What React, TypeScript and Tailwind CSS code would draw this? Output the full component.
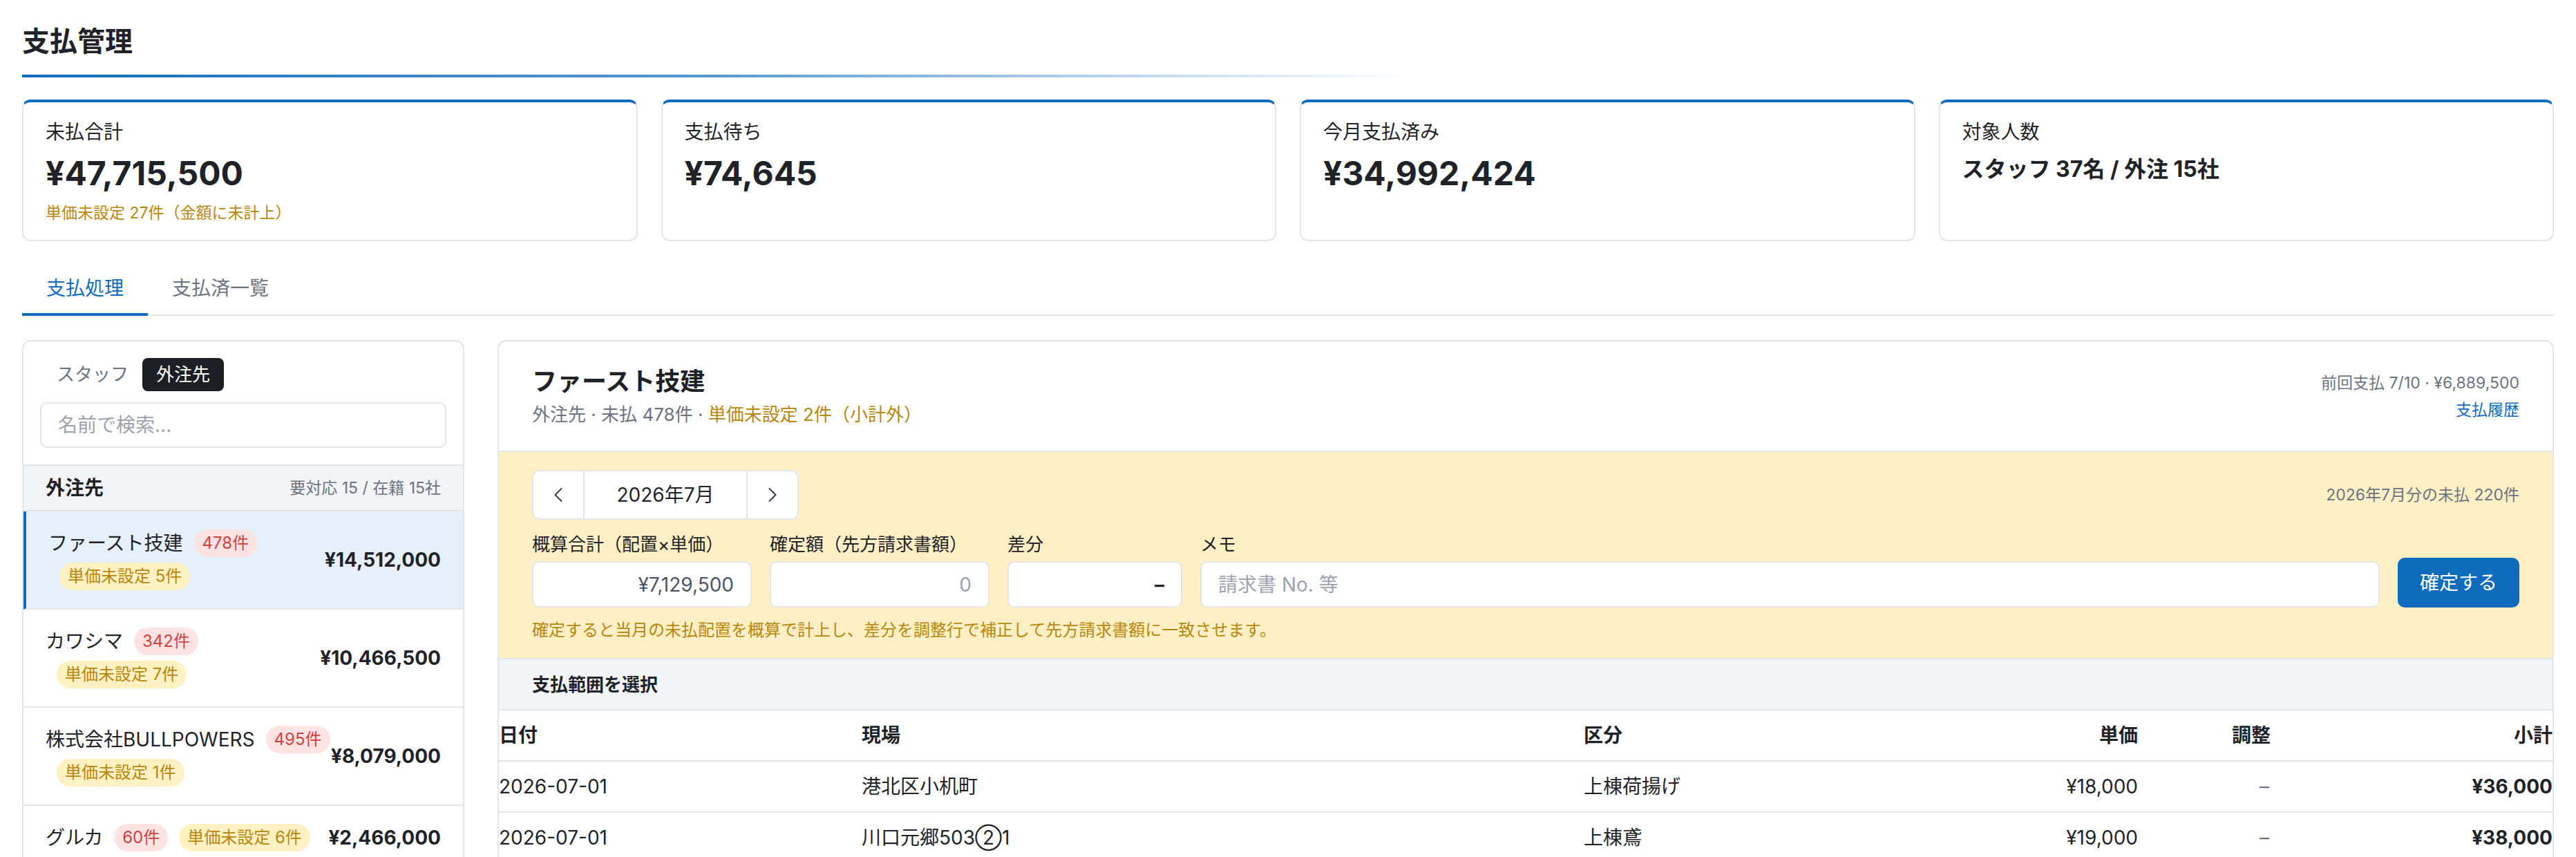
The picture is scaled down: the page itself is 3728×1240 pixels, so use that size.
import { ChevronLeft, ChevronRight } from "lucide-react";

const kpis = [
  { label: "未払合計", value: "¥47,715,500", note: "単価未設定 27件（金額に未計上）" },
  { label: "支払待ち", value: "¥74,645" },
  { label: "今月支払済み", value: "¥34,992,424" },
  { label: "対象人数", value: "スタッフ 37名 / 外注 15社", small: true },
];

const vendors = [
  { name: "ファースト技建", count: "478件", unset: "単価未設定 5件", amount: "¥14,512,000", active: true, wrap: true },
  { name: "カワシマ", count: "342件", unset: "単価未設定 7件", amount: "¥10,466,500", wrap: true },
  { name: "株式会社BULLPOWERS", count: "495件", unset: "単価未設定 1件", amount: "¥8,079,000", wrap: true },
  { name: "グルカ", count: "60件", unset: "単価未設定 6件", amount: "¥2,466,000" },
  { name: "大成工業", count: "41件", amount: "¥1,845,000" },
  { name: "ミナト建設", count: "38件", amount: "¥1,520,000" },
];

const rows = [
  { date: "2026-07-01", site: "港北区小机町", kind: "上棟荷揚げ", price: "¥18,000", total: "¥36,000" },
  { date: "2026-07-01", site: "川口元郷503②1", kind: "上棟鳶", price: "¥19,000", total: "¥38,000" },
  { date: "2026-07-02", site: "川口元郷503②1", kind: "上棟鳶", price: "¥19,000", total: "¥19,000" },
  { date: "2026-07-02", site: "港北区小机町", kind: "上棟荷揚げ", price: "¥18,000", total: "¥18,000" },
];

const Badge = ({ tone, children }: { tone: "red" | "yellow"; children: string }) => (
  <span
    className={
      tone === "red"
        ? "ml-[16px] inline-block shrink-0 rounded-full bg-[#fde4e2] px-[12px] text-[24px] leading-[40px] text-[#d23f3f]"
        : "ml-[16px] inline-block shrink-0 rounded-full bg-[#fff1c2] px-[12px] text-[24px] leading-[40px] text-[#b8860b]"
    }
  >
    {children}
  </span>
);

const App = () => {
  return (
    <div className="min-h-screen bg-white px-[32px] pb-[40px] text-[#1f2328] font-[family-name:'Inter','Noto_Sans_CJK_JP',sans-serif]">
      <h1 className="pt-[34px] text-[40px] font-bold leading-[52px]">支払管理</h1>
      <div className="mt-[22px] h-[4px] w-[2000px] bg-linear-to-r from-[#0f6cbd] via-[#0f6cbd]/70 to-transparent" />

      {/* KPI cards */}
      <div className="mt-[32px] grid grid-cols-4 gap-[34px]">
        {kpis.map((k) => (
          <div
            key={k.label}
            className="h-[205px] rounded-[12px] border-2 border-t-4 border-[#e3e5e9] border-t-[#0f6cbd] px-[32px] pt-[25px]"
          >
            <div className="text-[28px] leading-[36px]">{k.label}</div>
            {k.small ? (
              <div className="mt-[14px] text-[32px] font-bold leading-[44px]">{k.value}</div>
            ) : (
              <div className="mt-[14px] text-[48px] font-bold leading-[56px]">{k.value}</div>
            )}
            {k.note && (
              <div className="mt-[14px] text-[23px] leading-[30px] text-[#b8860b]">{k.note}</div>
            )}
          </div>
        ))}
      </div>

      {/* tabs */}
      <div className="mt-[32px] flex border-b-2 border-[#e3e5e9]">
        <button className="-mb-[2px] border-b-4 border-[#0f6cbd] px-[35px] py-[18px] text-[28px] leading-[36px] text-[#0f6cbd]">
          支払処理
        </button>
        <button className="-mb-[2px] border-b-4 border-transparent px-[35px] py-[18px] text-[28px] leading-[36px] text-[#6b7280]">
          支払済一覧
        </button>
      </div>

      <div className="mt-[35px] flex items-start gap-[48px]">
        {/* left: vendor list */}
        <div className="w-[640px] shrink-0 overflow-hidden rounded-[12px] border-2 border-[#e3e5e9]">
          <div className="p-[24px]">
            <div className="ml-[4px] flex">
              <button className="h-[48px] rounded-[8px] px-[20px] text-[26px] leading-[48px] text-[#6b7280]">
                スタッフ
              </button>
              <button className="h-[48px] rounded-[8px] bg-[#1b1f24] px-[20px] text-[26px] leading-[48px] text-white">
                外注先
              </button>
            </div>
            <input
              placeholder="名前で検索..."
              className="mt-[16px] h-[66px] w-full rounded-[10px] border-2 border-[#e3e5e9] px-[24px] text-[28px] outline-none placeholder:text-[#9ca3af]"
            />
          </div>
          <div className="flex h-[68px] items-center justify-between border-y-2 border-[#e3e5e9] bg-[#f3f4f7] px-[32px]">
            <span className="text-[28px] font-bold">外注先</span>
            <span className="text-[23px] text-[#6b7280]">要対応 15 / 在籍 15社</span>
          </div>
          {vendors.map((v) => (
            <div
              key={v.name}
              className={
                v.active
                  ? "flex items-center justify-between border-b-2 border-l-4 border-[#e3e5e9] border-l-[#0f6cbd] bg-[#e6f0fa] py-[22px] pl-[32px] pr-[32px]"
                  : "flex items-center justify-between border-b-2 border-[#e3e5e9] py-[22px] pl-[32px] pr-[32px]"
              }
            >
              <div className="min-w-0 flex-1 text-[28px]">
                <div className="flex h-[48px] items-center whitespace-nowrap">
                  <span>{v.name}</span>
                  <Badge tone="red">{v.count}</Badge>
                  {v.unset && !v.wrap && <Badge tone="yellow">{v.unset}</Badge>}
                </div>
                {v.unset && v.wrap && (
                  <div className="flex h-[48px] items-center">
                    <Badge tone="yellow">{v.unset}</Badge>
                  </div>
                )}
              </div>
              <div className="shrink-0 text-[28px] font-bold">{v.amount}</div>
            </div>
          ))}
        </div>

        {/* right: detail */}
        <div className="min-w-0 flex-1 overflow-hidden rounded-[12px] border-2 border-[#e3e5e9]">
          <div className="flex items-center justify-between border-b-2 border-[#e3e5e9] px-[48px] py-[34px]">
            <div>
              <div className="text-[36px] font-bold leading-[48px]">ファースト技建</div>
              <div className="mt-[6px] text-[26px] leading-[36px] text-[#6b7280]">
                外注先 · 未払 478件 · <span className="text-[#b8860b]">単価未設定 2件（小計外）</span>
              </div>
            </div>
            <div className="text-right text-[23px] leading-[32px]">
              <div className="text-[#6b7280]">前回支払 7/10 · ¥6,889,500</div>
              <a className="mt-[7px] block text-[#0f6cbd]">支払履歴</a>
            </div>
          </div>

          <div className="border-b-2 border-[#e3e5e9] bg-[#fef0c4] px-[48px] pb-[24px] pt-[26px]">
            <div className="flex items-center justify-between">
              <div className="flex h-[72px] w-[386px] overflow-hidden rounded-[10px] border-2 border-[#e3e5e9] bg-white">
                <button className="flex w-[74px] items-center justify-center border-r-2 border-[#e3e5e9] text-[#374151]">
                  <ChevronLeft size={36} strokeWidth={1.4} />
                </button>
                <div className="flex flex-1 items-center justify-center text-[28px]">2026年7月</div>
                <button className="flex w-[74px] items-center justify-center border-l-2 border-[#e3e5e9] text-[#374151]">
                  <ChevronRight size={36} strokeWidth={1.4} />
                </button>
              </div>
              <div className="text-[23px] text-[#6b7280]">2026年7月分の未払 220件</div>
            </div>

            <div className="mt-[20px] flex items-end gap-[26px]">
              <div className="w-[318px]">
                <div className="text-[26px] leading-[32px]">概算合計（配置×単価）</div>
                <input
                  readOnly
                  value="¥7,129,500"
                  className="mt-[8px] h-[67px] w-full rounded-[10px] border-2 border-[#e3e5e9] bg-white px-[24px] text-right text-[28px] text-[#4b5563] outline-none"
                />
              </div>
              <div className="w-[318px]">
                <div className="text-[26px] leading-[32px]">確定額（先方請求書額）</div>
                <input
                  placeholder="0"
                  className="mt-[8px] h-[67px] w-full rounded-[10px] border-2 border-[#e3e5e9] bg-white px-[24px] text-right text-[28px] outline-none placeholder:text-[#9ca3af]"
                />
              </div>
              <div className="w-[253px]">
                <div className="text-[26px] leading-[32px]">差分</div>
                <div className="mt-[8px] flex h-[67px] items-center justify-end rounded-[10px] border-2 border-[#e3e5e9] bg-white px-[24px] text-[28px] font-bold">
                  –
                </div>
              </div>
              <div className="min-w-0 flex-1">
                <div className="text-[26px] leading-[32px]">メモ</div>
                <input
                  placeholder="請求書 No. 等"
                  className="mt-[8px] h-[67px] w-full rounded-[10px] border-2 border-[#e3e5e9] bg-white px-[24px] text-[28px] outline-none placeholder:text-[#9ca3af]"
                />
              </div>
              <button className="h-[72px] w-[176px] rounded-[10px] bg-[#0f6cbd] text-[28px] text-white">
                確定する
              </button>
            </div>

            <div className="mt-[17px] text-[24px] leading-[32px] text-[#b8860b]">
              確定すると当月の未払配置を概算で計上し、差分を調整行で補正して先方請求書額に一致させます。
            </div>
          </div>

          <div className="flex h-[74px] items-center border-b-2 border-[#e3e5e9] bg-[#f3f4f7] px-[48px] text-[26px] font-bold">
            支払範囲を選択
          </div>

          <div className="grid h-[74px] grid-cols-[525px_1045px_520px_282px_192px_1fr] items-center border-b-2 border-[#e3e5e9] text-[28px] font-bold">
            <div>日付</div>
            <div>現場</div>
            <div>区分</div>
            <div className="text-right">単価</div>
            <div className="text-right">調整</div>
            <div className="text-right">小計</div>
          </div>
          {rows.map((r, i) => (
            <div
              key={i}
              className="grid h-[74px] grid-cols-[525px_1045px_520px_282px_192px_1fr] items-center border-b-2 border-[#e3e5e9] text-[28px]"
            >
              <div>{r.date}</div>
              <div>{r.site}</div>
              <div>{r.kind}</div>
              <div className="text-right">{r.price}</div>
              <div className="pr-[2px] text-right text-[#6b7280]">–</div>
              <div className="text-right font-bold">{r.total}</div>
            </div>
          ))}
        </div>
      </div>
    </div>
  );
};

export default App;
